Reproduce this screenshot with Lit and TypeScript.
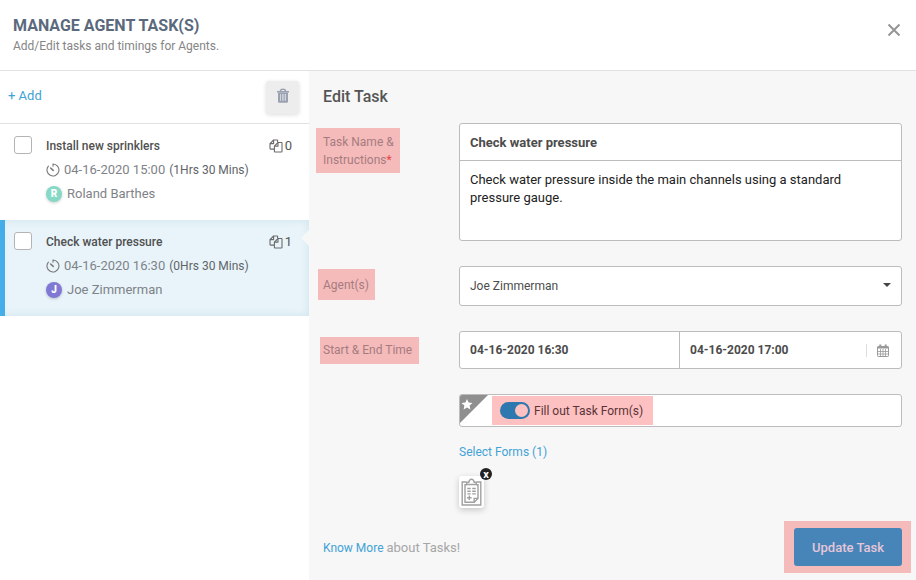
import { LitElement, html, css, svg } from "lit";
import { customElement, property, state } from "lit/decorators.js";
import { classMap } from "lit/directives/class-map.js";

interface Task {
  name: string;
  start: string;
  duration: string;
  agent: string;
  tone: string;
  forms: number;
}

const TASKS: Task[] = [
  { name: "Install new sprinklers", start: "04-16-2020 15:00", duration: "(1Hrs 30 Mins)", agent: "Roland Barthes", tone: "mint", forms: 0 },
  { name: "Check water pressure", start: "04-16-2020 16:30", duration: "(0Hrs 30 Mins)", agent: "Joe Zimmerman", tone: "violet", forms: 1 },
];

const closeIcon = svg`<svg width="14" height="14" viewBox="0 0 14 14" fill="none" stroke="#959595" stroke-width="2"><path d="M1.500 1.500l11 11M12.500 1.500l-11 11"/></svg>`;

const trashIcon = svg`<svg width="14" height="16" viewBox="0 0 14 16" fill="#9aa2b1"><path fill-rule="evenodd" d="M1 3h2.600C4 1.300 5.200.6 7 .6s3 .7 3.400 2.400H13v1.500H1zM5.200 3h3.600C8.500 2.200 8 1.900 7 1.900S5.500 2.200 5.200 3z"/><path fill-rule="evenodd" d="M2 4.500h10v8.900c0 .9-.6 1.400-1.500 1.400h-7c-.9 0-1.500-.5-1.500-1.400zM4.200 6v6.800h.7V6zM6.100 6v6.800h.6V6zM7.600 6v6.800h.6V6zM9.300 6v6.800h.7V6z"/></svg>`;

const copyIcon = svg`<svg width="14" height="14" viewBox="0 0 14 14" fill="none" stroke="#6a6a6a" stroke-width="1.100" stroke-linejoin="round"><path d="M8.600 3V1.600c0-.4-.2-.6-.6-.6H4.600L1 4.600V9.500c0 .4.200.6.600.6h3.600"/><path d="M4.600 1v3.600H1"/><path d="M9 3.500h3.400c.4 0 .6.2.6.6v8.300c0 .4-.2.600-.6.600H6c-.4 0-.6-.2-.6-.6V7.100z"/><path d="M9 3.500v3.600H5.400"/></svg>`;

const timerIcon = svg`<svg width="14" height="14" viewBox="0 0 14 14" fill="none" stroke="#777" stroke-width="1.100" stroke-linecap="round"><path d="M7 3.200V1a6 6 0 1 1-4.600 2.100"/><path d="M4.600 5l2.600 2.400" stroke-width="1.500"/></svg>`;

const calendarIcon = svg`<svg width="12" height="13" viewBox="0 0 12 13" fill="none" stroke="#999"><rect x=".5" y="2.500" width="11" height="10" rx=".8"/><path d="M.5 3.500h11" stroke-width="2"/><path d="M3.500 5v7.500M6 5v7.500M8.500 5v7.500M.5 7.500h11M.5 10h11" stroke-width=".8"/><path d="M3.300.5v2.800M8.700.5v2.800" stroke-width="2"/></svg>`;

const starIcon = svg`<svg width="28" height="28" viewBox="0 0 28 28"><path d="M0 0h28L0 28z" fill="#8f8f8f"/><path d="M7 4l1.600 3.500 3.900.5-2.900 2.600.8 3.900L7 12.600l-3.400 1.900.8-3.900L1.500 8l3.900-.5z" fill="#fff"/></svg>`;

const clipboardIcon = svg`<svg width="21" height="28" viewBox="0 0 21 28" fill="none" stroke="#a0a0a0" stroke-width="1.400"><path d="M5 4H1.200v23h18.600V4H16"/><path d="M5.500 6.800H4v17.400h9.200l3.800-3.800V6.800h-1.500"/><path d="M13.200 24.200v-3.800H17"/><path d="M5.700 6.500V4.200h2.100C8.200 2.200 9 1.200 10.500 1.200s2.300 1 2.700 3h2.100v2.300z" fill="#fff"/><path d="M6.300 10.500h3.400M11.200 10.500h3.600M6.300 13.200h3.400M11.200 13.200h3.600M6.300 15.900h3.400M11.200 15.900h3.600M6 19.800h4.600M8.300 17.600v4.400"/></svg>`;

const base = css`
  * { box-sizing: border-box; }
  button, input, select, textarea { font: inherit; color: inherit; margin: 0; border-radius: 0; }
  button { border: 0; background: none; padding: 0; cursor: pointer; }
  a { color: #42a2d6; text-decoration: none; }
  svg { display: block; flex: none; }
`;

@customElement("task-item")
export class TaskItem extends LitElement {
  static styles = [
    base,
    css`
      :host { display: block; }
      .item {
        position: relative; display: flex; gap: 14px; height: 96px;
        padding: 12px 17px 0 14px;
      }
      .selected {
        background: #e8f4fa;
        box-shadow: inset 5px 0 #45aee8, inset 0 0 8px #cfe2ea;
      }
      .selected::after {
        content: ""; position: absolute; right: 0; top: 10px;
        border: 8px solid transparent; border-left-width: 0; border-right-color: #f7f7f7;
      }
      .check {
        appearance: none; flex: none; width: 18px; height: 18px;
        border: 1px solid #b4b4b4; border-radius: 3px; background: #fff;
      }
      .check:checked { background: #2e78b0; }
      .body { flex: 1; font-size: 13px; line-height: 24px; color: #7f8388; margin-top: -2px; }
      .line { display: flex; align-items: center; gap: 4px; }
      .name { flex: 1; font-size: 12px; font-weight: 500; color: #505050; }
      .count { display: flex; align-items: center; gap: 2px; color: #555; }
      .duration { font-size: 12px; color: #606468; }
      .person { gap: 5px; }
      .avatar {
        width: 16px; height: 16px; border-radius: 50%; color: #fff;
        font-size: 10px; font-weight: 900; line-height: 16px; text-align: center;
        box-shadow: 0 1px 3px #0003;
      }
      .mint { background: #86d9c6; }
      .violet { background: #8078d4; }
    `,
  ];

  @property({ attribute: false }) task!: Task;
  @property({ type: Boolean }) selected = false;

  render() {
    const t = this.task;
    return html`
      <div class=${classMap({ item: true, selected: this.selected })}>
        <input class="check" type="checkbox" aria-label=${t.name} />
        <div class="body">
          <div class="line">
            <span class="name">${t.name}</span>
            <span class="count">${copyIcon}${t.forms}</span>
          </div>
          <div class="line">${timerIcon}<span>${t.start}</span><span class="duration">${t.duration}</span></div>
          <div class="line person"><span class="avatar ${t.tone}">${t.agent[0]}</span><span>${t.agent}</span></div>
        </div>
      </div>
    `;
  }
}

@customElement("task-form")
export class TaskForm extends LitElement {
  static styles = [
    base,
    css`
      :host { display: flex; flex-direction: column; padding: 14px 14px 7px; font-size: 12px; color: #4c4c4c; }
      .heading { margin: 0 0 14px; font-size: 16px; line-height: 24px; font-weight: 500; color: #555; }
      .rows { display: grid; gap: 25px; }
      .row { display: grid; grid-template-columns: 136px minmax(0, 1fr); align-items: center; }
      .top { align-items: start; }
      .label { justify-self: start; line-height: 18px; color: #a67b7e; background: #f5bbbb; }
      .wide { margin: 5px 0 0 -7px; padding: 5px 5px 4px 7px; width: 84px; }
      .mid { margin: 0 0 4px -5px; padding: 7px 6px 6px 5px; }
      .slim { margin-left: -3px; padding: 4px 7px 5px 3px; }
      .required { color: #e64545; }
      .box { border: 1px solid #bcbcbc; border-radius: 3px; background: #fff; overflow: hidden; }
      .title, .notes { display: block; width: 100%; border: 0; outline: 0; background: none; padding: 0 10px; }
      .title { height: 37px; border-bottom: 1px solid #bcbcbc; font-size: 13px; font-weight: 700; }
      .notes { height: 79px; padding: 10px; line-height: 18px; font-size: 13px; resize: none; color: #222; }
      .picker { position: relative; }
      .picker::after {
        content: ""; position: absolute; right: 10px; top: 16px;
        border: 4px solid transparent; border-bottom-width: 0; border-top-color: #444;
      }
      .select { display: block; appearance: none; width: 100%; height: 38px; border: 0; padding: 0 10px; background: none; }
      .dates { display: flex; align-items: center; height: 38px; }
      .date { flex: 1; min-width: 0; height: 36px; padding: 0 10px; border: 0; background: none; font-weight: 700; }
      .start { border-right: 1px solid #bcbcbc; }
      .end { flex: 0 1 186px; }
      .calendar { padding: 0 12px 0 10px; border-left: 1px solid #ddd; }
      .option { display: flex; align-items: center; gap: 4px; height: 33px; }
      .star { align-self: start; }
      .toggle {
        display: flex; align-items: center; gap: 4px; height: 29px;
        padding: 0 10px 0 8px; background: #fdc1c1; color: #5a3338;
      }
      .switch {
        appearance: none; width: 30px; height: 17px; border-radius: 9px; background: #bbb;
        display: flex; padding: 2px; cursor: pointer;
      }
      .switch::before { content: ""; width: 13px; height: 13px; border-radius: 50%; background: #fdc1c1; }
      .switch:checked { background: #2e78b0; justify-content: flex-end; }
      .forms { margin: 16px 0 0 136px; }
      .link { font-size: 12px; line-height: 18px; }
      .form { position: relative; width: 25px; margin-top: 15px; padding: 2px; border-radius: 3px; background: #fff; box-shadow: 0 2px 6px #0003; }
      .remove {
        position: absolute; right: -8px; top: -8px; width: 12px; height: 12px; border-radius: 50%;
        background: #222; color: #fff; font-size: 11px; font-weight: 700; line-height: 11px;
      }
      .foot { display: flex; align-items: center; justify-content: space-between; margin: auto -9px 0 0; color: #a6a6a6; }
      .about { font-size: 13px; }
      .action { padding: 7px 9px 7px 10px; background: #f5bbbb; }
      .update {
        display: block; width: 108px; height: 38px; border-radius: 3px;
        background: #4785b9; color: #e6c6d8; font-size: 13px; font-weight: 500;
      }
    `,
  ];

  @state() private fill = true;

  render() {
    return html`
      <h2 class="heading">Edit Task</h2>
      <div class="rows">
        <div class="row top">
          <label class="label wide" for="title">Task Name &amp;<br />Instructions<span class="required">*</span></label>
          <div class="box">
            <input class="title" id="title" .value=${"Check water pressure"} />
            <textarea class="notes" aria-label="Instructions" .value=${"Check water pressure inside the main channels using a standard pressure gauge."}></textarea>
          </div>
        </div>
        <div class="row">
          <label class="label mid" for="agent">Agent(s)</label>
          <div class="box picker">
            <select class="select" id="agent"><option>Joe Zimmerman</option><option>Roland Barthes</option></select>
          </div>
        </div>
        <div class="row">
          <label class="label slim" for="start">Start &amp; End Time</label>
          <div class="box dates">
            <input class="date start" id="start" .value=${"04-16-2020 16:30"} />
            <input class="date end" aria-label="End time" .value=${"04-16-2020 17:00"} />
            <button class="calendar" aria-label="Open calendar">${calendarIcon}</button>
          </div>
        </div>
        <div class="row">
          <span></span>
          <div class="box option">
            <span class="star">${starIcon}</span>
            <label class="toggle">
              <input class="switch" type="checkbox" role="switch" .checked=${this.fill}
                @change=${(e: Event) => (this.fill = (e.target as HTMLInputElement).checked)} />
              Fill out Task Form(s)
            </label>
          </div>
        </div>
      </div>
      <div class="forms">
        <a class="link" href="#forms">Select Forms (1)</a>
        <div class="form">${clipboardIcon}<button class="remove" aria-label="Remove form">x</button></div>
      </div>
      <div class="foot">
        <span><a href="#help">Know More</a> <span class="about">about Tasks!</span></span>
        <div class="action"><button class="update">Update Task</button></div>
      </div>
    `;
  }
}

@customElement("app-root")
export class AppRoot extends LitElement {
  static styles = [
    base,
    css`
      :host {
        display: flex; flex-direction: column; min-height: 100vh; background: #fff;
        font-family: Roboto, "Liberation Sans", sans-serif; font-size: 12px;
      }
      .top {
        display: flex; align-items: flex-start; justify-content: space-between;
        height: 71px; padding: 15px 15px 0 13px; border-bottom: 1px solid #e1e1e1;
      }
      .title { margin: 0; font-size: 16px; line-height: 21px; font-weight: 700; color: #5b697d; }
      .sub { margin: 0; line-height: 20px; color: #858585; }
      .close { margin-top: 8px; }
      .main { flex: 1; display: grid; grid-template-columns: 309px minmax(0, 1fr); }
      .bar {
        display: flex; align-items: center; justify-content: space-between;
        height: 53px; padding: 0 10px 0 8px; border-bottom: 1px solid #e1e1e1;
      }
      .add { color: #42a2d6; font-size: 13px; margin-bottom: 4px; }
      .trash {
        display: flex; align-items: flex-start; justify-content: center; width: 33px; height: 33px;
        padding-top: 7px; border-radius: 3px; background: #ededed; box-shadow: 0 1px 4px #0002;
      }
      .panel { background: #f7f7f7; }
    `,
  ];

  render() {
    return html`
      <header class="top">
        <div>
          <h1 class="title">MANAGE AGENT TASK(S)</h1>
          <p class="sub">Add/Edit tasks and timings for Agents.</p>
        </div>
        <button class="close" aria-label="Close">${closeIcon}</button>
      </header>
      <div class="main">
        <aside>
          <div class="bar">
            <button class="add">+ Add</button>
            <button class="trash" aria-label="Delete">${trashIcon}</button>
          </div>
          ${TASKS.map((t, i) => html`<task-item .task=${t} ?selected=${i === 1}></task-item>`)}
        </aside>
        <task-form class="panel"></task-form>
      </div>
    `;
  }
}
